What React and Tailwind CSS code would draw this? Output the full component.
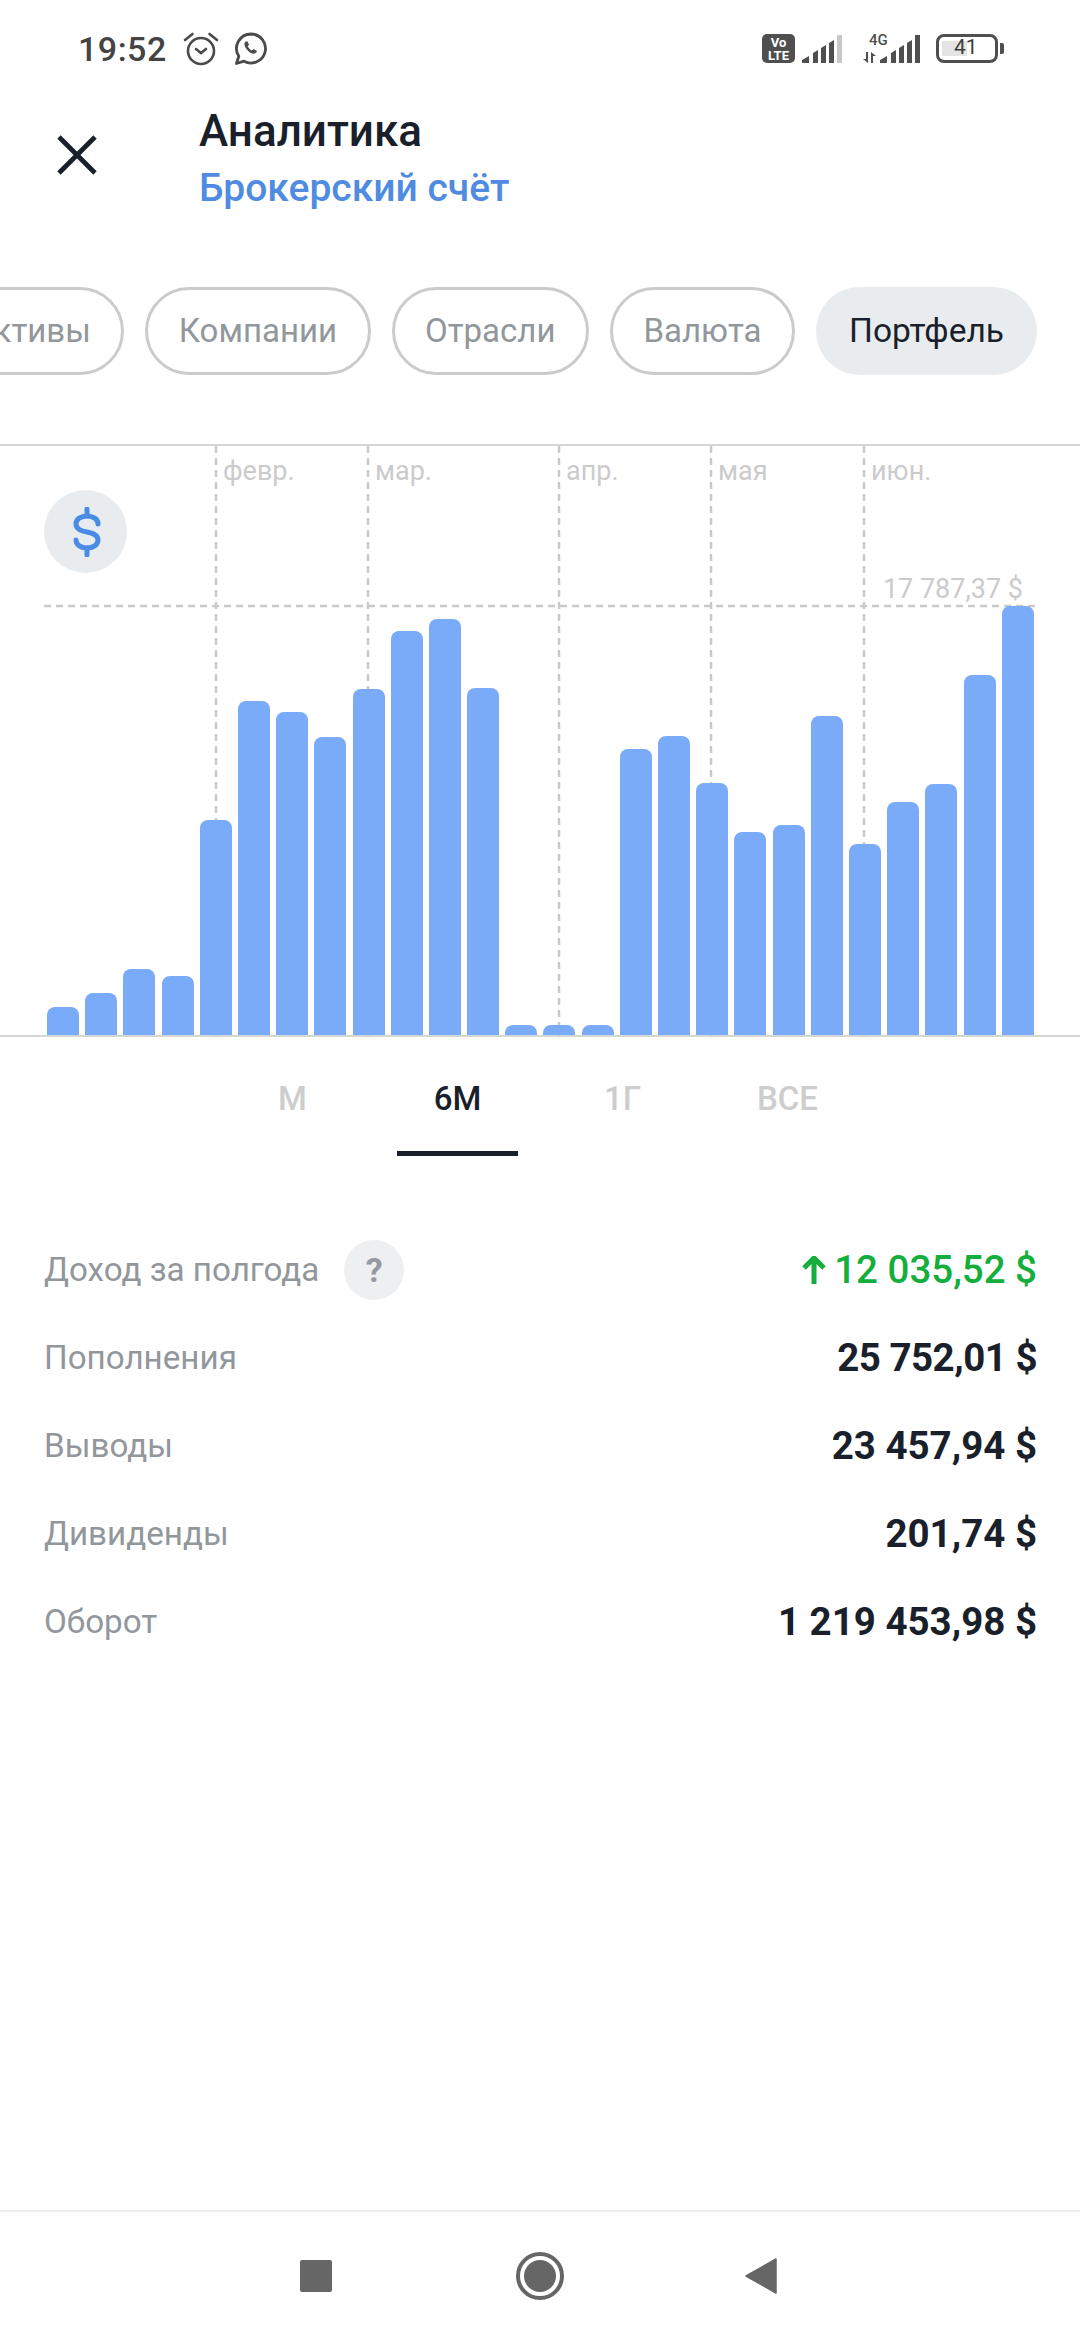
import { X } from "lucide-react";

const font = { fontFamily: "Roboto, sans-serif" };

const tabs = [
  { label: "Активы" },
  { label: "Компании" },
  { label: "Отрасли" },
  { label: "Валюта" },
  { label: "Портфель", active: true },
];

const bars = [28, 42, 66, 59, 215, 334, 323, 298, 346, 404, 416, 347, 10, 10, 10, 286, 299, 252, 203, 210, 319, 191, 233, 251, 360, 429];

const months = [
  { label: "февр.", x: 216 },
  { label: "мар.", x: 368 },
  { label: "апр.", x: 559 },
  { label: "мая", x: 711 },
  { label: "июн.", x: 864 },
];

const rows = [
  { label: "Доход за полгода", value: "12 035,52 $", green: true, help: true },
  { label: "Пополнения", value: "25 752,01 $", tight: true },
  { label: "Выводы", value: "23 457,94 $" },
  { label: "Дивиденды", value: "201,74 $" },
  { label: "Оборот", value: "1 219 453,98 $" },
];

const Signal = ({ last, className }) => (
  <svg className={className} width="40" height="29" viewBox="0 0 40 29" fill="#4f4f4f">
    <path d="M0 29v-3l7-4v7zM11 29V19l5-3v13zM19 29V14l5-3v18zM27 29V9l5-3v23z" />
    <rect x="35" y="1" width="5" height="28" fill={last} />
  </svg>
);

const StatusBar = () => (
  <div className="h-[66px] pt-[31px] pl-[78px] pr-[76px] flex items-start justify-between">
    <div className="flex items-center">
      <span className="text-[34px] leading-[36px] font-medium text-[#444444] tracking-[0.5px]">19:52</span>
      <svg className="ml-[16px]" width="36" height="36" viewBox="0 0 36 36" fill="none" stroke="#4a4a4a" strokeWidth="2.6">
        <circle cx="18" cy="20" r="13" />
        <path d="M13 18l5 4 5-4" strokeLinecap="round" />
        <path d="M2 9L9.500 3M34 9L26.500 3" strokeLinecap="round" />
      </svg>
      <svg className="ml-[15px]" width="34" height="36" viewBox="0 0 34 36" fill="none" stroke="#4a4a4a" strokeWidth="2.8">
        <path d="M17 3a14.500 14.500 0 1 1-7 27.200L2.500 32.500l2.300-7.200A14.500 14.500 0 0 1 17 3z" strokeLinejoin="round" />
        <path d="M11.500 10.500c-1.600 1.500-1.400 4 .6 7 2 3 4.800 5 7.500 5.200 1.600.1 3-.9 3.400-2.600l-3.600-2-1.600 1.400c-1.700-.8-3.200-2.300-4.100-4.200l1.400-1.500-1.600-3.400z" fill="#4a4a4a" stroke="none" />
      </svg>
    </div>
    <div className="flex items-center mt-[3px]">
      <div className="w-[33px] h-[29px] rounded-[5px] bg-[#4f4f4f] text-white text-[13px] leading-[13px] font-bold text-center pt-[2px]">
        <div>Vo</div>
        <div>LTE</div>
      </div>
      <Signal className="ml-[7px]" last="#c8c8c8" />
      <div className="ml-[21px] w-[17px] h-[29px] text-[#4f4f4f]">
        <div className="ml-[6px] text-[15px] leading-[13px] font-medium whitespace-nowrap">4G</div>
        <svg className="mt-[5px]" width="13" height="11" viewBox="0 0 13 11" fill="#4f4f4f">
          <path d="M3 0h2v11L0 7h3zM8 11V0l5 4h-3v7z" />
        </svg>
      </div>
      <Signal className="ml-0" last="#4f4f4f" />
      <div className="ml-[16px] w-[62px] h-[29px] rounded-[8px] border-[3.5px] border-[#4f4f4f] relative flex items-center">
        <div className="ml-[3px] w-[25px] h-[15px] bg-[#e4e4e4]" />
        <span className="absolute left-[15px] top-[-2px] text-[21px] leading-[24px] text-[#3d3d3d]">41</span>
      </div>
      <div className="ml-[2px] w-[4px] h-[11px] rounded-r-[2px] bg-[#4f4f4f]" />
    </div>
  </div>
);

const Header = () => (
  <div className="h-[190px] flex">
    <div className="w-[199px] pl-[41px] pt-[53px]">
      <X size={72} strokeWidth={1.6} color="#1a1f2c" strokeLinecap="butt" />
    </div>
    <div>
      <div className="text-[44px] leading-[50px] font-medium text-[#1a1f2c] mt-[40px]">Аналитика</div>
      <div className="text-[39px] leading-[44px] font-medium text-[#4f8be0] mt-[10px]">Брокерский счёт</div>
    </div>
  </div>
);

const Tabs = () => (
  <div className="mt-[31px] h-[88px] flex justify-end gap-[21px] pr-[43px] overflow-hidden">
    {tabs.map((t) => (
      <div
        key={t.label}
        className={
          "h-[88px] rounded-[44px] flex items-center shrink-0 " +
          (t.active
            ? "bg-[#e9ecee] text-[#1a1f2c] text-[33.5px] px-[33px]"
            : "border-[3px] border-[#cbcbcb] text-[#92979c] text-[33px] px-[30.5px]")
        }
      >
        {t.label}
      </div>
    ))}
  </div>
);

const Chart = () => (
  <div className="mt-[69px] relative h-[593px] border-t-2 border-b-2 border-[#d4d6d8]">
    <svg className="absolute inset-0" width="1080" height="590" fill="none" stroke="#c9c9c9" strokeWidth="2.5" strokeDasharray="7 5">
      {months.map((m) => (
        <line key={m.x} x1={m.x} y1="0" x2={m.x} y2="590" />
      ))}
      <line x1="44" y1="160" x2="1036" y2="160" />
    </svg>
    {months.map((m) => (
      <span key={m.label} className="absolute top-[8px] text-[27px] leading-[34px] text-[#cbcbcb]" style={{ left: m.x + 7 }}>
        {m.label}
      </span>
    ))}
    <div className="absolute left-[44px] top-[44px] w-[83px] h-[83px] rounded-full bg-[#e9ecee] flex items-center justify-center">
      <svg className="ml-[3px]" width="28" height="50" viewBox="0 0 28 50" fill="none" stroke="#4a8be6" strokeWidth="5" strokeLinecap="round">
        <path d="M14 2v7M14 41v7" />
        <path d="M25 17c0-5-5-8-11-8S3 12 3 17s5 7 11 8 11 3 11 8-5 8-11 8-11-3-11-8" />
      </svg>
    </div>
    <span className="absolute right-[57px] top-[127px] text-[27px] leading-[32px] text-[#cbcbcb]">17 787,37 $</span>
    <div className="absolute left-[47px] bottom-0 flex items-end gap-[6.2px]">
      {bars.map((h, i) => (
        <div key={i} className="w-[32px] rounded-t-[8px] bg-[#7aabf8]" style={{ height: h }} />
      ))}
    </div>
  </div>
);

const Periods = () => (
  <div className="h-[119px] flex justify-center gap-[44px] text-[33px] font-medium text-[#cdcdcd]">
    <div className="w-[121px] text-center pt-[37px]">М</div>
    <div className="w-[121px] text-center pt-[37px] text-[#1a1f2c] border-b-[5px] border-[#1a1f2c] h-[119px]">6М</div>
    <div className="w-[121px] text-center pt-[37px]">1Г</div>
    <div className="w-[121px] text-center pt-[37px]">ВСЕ</div>
  </div>
);

const Stats = () => (
  <div className="mt-[70px] pl-[44px] pr-[43px]">
    {rows.map((r) => (
      <div key={r.label} className="h-[88px] flex items-center justify-between">
        <div className="flex items-center">
          <span className="text-[33.2px] text-[#92979c]">{r.label}</span>
          {r.help && (
            <span className="ml-[25px] w-[60px] h-[60px] rounded-full bg-[#edeff1] flex items-center justify-center text-[34px] font-bold text-[#9499a3]">?</span>
          )}
        </div>
        <div className={"flex items-center text-[38.5px] " + (r.green ? "font-medium text-[#13ae3c] " : "font-bold text-[#1a1f2c] ") + (r.tight ? "tracking-[-0.5px]" : "")}>
          {r.green && (
            <svg className="mr-[8px]" width="24" height="28" viewBox="0 0 24 28" fill="none" stroke="#13ae3c" strokeWidth="5">
              <path d="M12 28V3M2 12l10-10 10 10" />
            </svg>
          )}
          {r.value}
        </div>
      </div>
    ))}
  </div>
);

const NavBar = () => (
  <div className="h-[130px] border-t-2 border-[#ececec] flex items-center relative">
    <div className="ml-[300px] w-[32px] h-[32px] rounded-[2px] bg-[#666666]" />
    <div className="ml-[184px] w-[48px] h-[48px] rounded-full border-[4px] border-[#666666] flex items-center justify-center">
      <div className="w-[32px] h-[32px] rounded-full bg-[#666666]" />
    </div>
    <svg className="ml-[181px]" width="32" height="38" viewBox="0 0 32 38">
      <path d="M31 2v34L1 19z" fill="#666666" stroke="#666666" strokeWidth="1.5" strokeLinejoin="round" />
    </svg>
  </div>
);

export default function App() {
  return (
    <div className="w-[1080px] h-[2340px] bg-white flex flex-col overflow-hidden" style={font}>
      <StatusBar />
      <Header />
      <Tabs />
      <Chart />
      <Periods />
      <Stats />
      <div className="flex-1" />
      <NavBar />
    </div>
  );
}
